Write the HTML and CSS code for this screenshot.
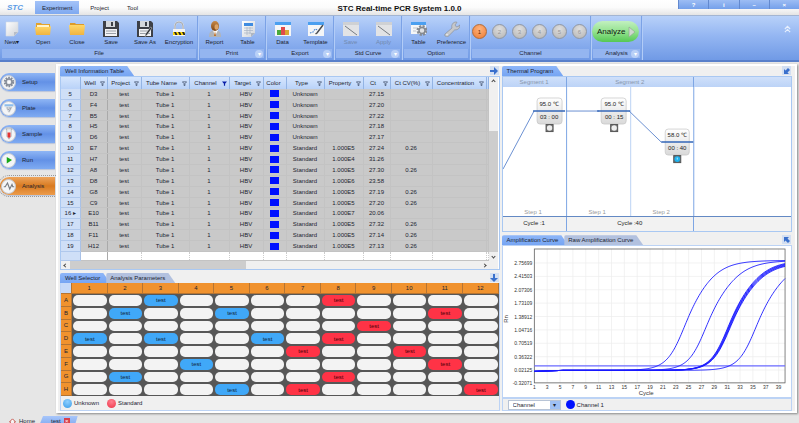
FILE: index.html
```html
<!DOCTYPE html>
<html lang="en">
<head>
<meta charset="utf-8">
<title>STC Real-time PCR System 1.0.0</title>
<link rel="stylesheet" href="styles.css">
</head>
<body>
<svg class="defs" aria-hidden="true">
  <defs>
    <linearGradient id="gold" x1="0" y1="0" x2="0" y2="1"><stop offset="0" stop-color="#ffd768"/><stop offset="1" stop-color="#f0b440"/></linearGradient>
    <linearGradient id="paper" x1="0" y1="0" x2="1" y2="1"><stop offset="0" stop-color="#ffffff"/><stop offset="1" stop-color="#cfd3d8"/></linearGradient>
    <linearGradient id="brown" x1="0" y1="0" x2="0" y2="1"><stop offset="0" stop-color="#c98a48"/><stop offset="1" stop-color="#7d4516"/></linearGradient>
    <linearGradient id="card" x1="0" y1="0" x2="0" y2="1"><stop offset="0" stop-color="#ffffff"/><stop offset="1" stop-color="#d9d9d9"/></linearGradient>
    <symbol id="i-new" viewBox="0 0 16 16"><path d="M2 1h12v10l-4 4H2z" fill="url(#paper)" stroke="#d5dbe6" stroke-width=".6"/><path d="M14 11h-4v4z" fill="#b8bec8"/></symbol>
    <symbol id="i-open" viewBox="0 0 16 16"><path d="M1 2h5l1 1h8v10H1z" fill="#e3a32d"/><path d="M2 4h12v4H2z" fill="#fff3cd"/><path d="M0 6h14l2-1-1 9H1z" fill="url(#gold)"/></symbol>
    <symbol id="i-close" viewBox="0 0 16 16"><path d="M1 2h5l1 1h8v11H1z" fill="#dd9b28"/><path d="M0 4h16l-1 10H1z" fill="url(#gold)"/></symbol>
    <symbol id="i-save" viewBox="0 0 16 16"><path d="M0 0h14l2 2v14H0z" fill="#3d4047"/><path d="M3 0h9v6H3z" fill="#d4d8dc"/><path d="M8 1h2v4H8z" fill="#3d4047"/><path d="M2 8h12v7H2z" fill="#f1f2f4"/><path d="M3 10h10M3 12.500h10" stroke="#9ba0a8" stroke-width="1"/></symbol>
    <symbol id="i-saveas" viewBox="0 0 16 16"><use href="#i-save"/><path d="M15 7l-5 7-2 1.500.5-2.500 5-7z" fill="#2b2d31" stroke="#d9dce0" stroke-width=".5"/></symbol>
    <symbol id="i-lock" viewBox="0 0 16 16"><path d="M4 8V5a4 4 0 0 1 8 0v3" fill="none" stroke="#d6d9de" stroke-width="2"/><path d="M4 8V5a4 4 0 0 1 8 0v3" fill="none" stroke="#7c8086" stroke-width=".5"/><path d="M2 8h12v7H2z" fill="#f3f3f3"/><path d="M2 11h12v3H2z" fill="#ffd800"/><path d="M3 11h2l1.500 3h-2zM7 11h2l1.500 3h-2zM11 11h2l1 2v1h-1.500z" fill="#222"/></symbol>
    <symbol id="i-user" viewBox="0 0 16 16"><path d="M2 16c0-5 2-7 6-7s6 2 6 7z" fill="#b0b4ba"/><path d="M6 9l2 6 3-6z" fill="#fff"/><path d="M8 10l1 5H7z" fill="#bb6b20"/><ellipse cx="8" cy="5" rx="4" ry="5" fill="url(#brown)"/><ellipse cx="9.500" cy="6" rx="2" ry="2.800" fill="#dca468"/></symbol>
    <symbol id="i-doc" viewBox="0 0 16 16"><path d="M2 0h13v12l-4 4H2z" fill="url(#paper)"/><path d="M4 2h9v3H4z" fill="#3f8be0"/><path d="M4 7h9M4 9.500h9M4 12h7M7 6v8M10 6v7" stroke="#a9b4c4" stroke-width=".7"/><path d="M15 12h-4v4z" fill="#aeb5c0"/></symbol>
    <symbol id="i-data" viewBox="0 0 16 16"><path d="M0 1h16v14H0z" fill="#f5f6f7"/><path d="M0 1h16v3H0z" fill="#4a9ff0"/><path d="M2 9h4v5H2z" fill="#49a93c"/><path d="M6 6h4v8H6z" fill="#e04a4a"/><path d="M10 9h4v5h-4z" fill="#d9a832"/></symbol>
    <symbol id="i-template" viewBox="0 0 16 16"><path d="M0 1h16v14H0z" fill="#f5f6f7"/><path d="M0 1h16v3H0z" fill="#4a9ff0"/><path d="M2 12l3-1 2-3 3 1" fill="none" stroke="#4a87d4" stroke-width="1.200" stroke-dasharray="1.500 1"/><path d="M15 4l-6 8-1.500 1" fill="none" stroke="#4a4d52" stroke-width="1.500"/></symbol>
    <symbol id="i-curve" viewBox="0 0 16 16"><path d="M0 1h16v14H0z" fill="#e2e3e5"/><path d="M0 1h16v3H0z" fill="#cfd1d4"/><path d="M2 5l12 9" stroke="#767b82" stroke-width="1"/></symbol>
    <symbol id="i-option" viewBox="0 0 16 16"><path d="M0 1h15v12H0z" fill="#f5f6f7"/><path d="M0 1h15v3H0z" fill="#4a9ff0"/><path d="M2 7h4M2 10h3" stroke="#c0c5cc"/><circle cx="11" cy="9.500" r="4" fill="none" stroke="#878c93" stroke-width="3" stroke-dasharray="2 1.140"/><circle cx="11" cy="9.500" r="3" fill="#dfe1e4" stroke="#85898f" stroke-width="1.500"/></symbol>
    <symbol id="i-wrench" viewBox="0 0 16 16"><path d="M1 13l7-6c-1-3 1-6 4-6l1 .3-2 2.700 1.500 2L15 5l.8-1.200c.6 3-2 5.500-5 5L4 15.500c-2 1-4-1-3-2.500z" fill="#c6c8cb" stroke="#85888d" stroke-width=".6"/><circle cx="3" cy="13.500" r=".8" fill="#eceef0"/></symbol>
    <symbol id="i-gear" viewBox="0 0 16 16"><circle cx="8" cy="8" r="5.500" fill="none" stroke="#858c98" stroke-width="3" stroke-dasharray="2.200 1.256"/><circle cx="8" cy="8" r="4" fill="#e9ebee" stroke="#858c98" stroke-width="2"/><circle cx="8" cy="8" r="1.500" fill="#fff"/></symbol>
    <symbol id="i-plate" viewBox="0 0 16 16"><path d="M2 3h12v3H2z" fill="#8dbdec"/><path d="M3 6h10l-4 8H7z" fill="#d7dbe0"/><path d="M5 8h2M8 8h2M6 10h2M11 7l-3 6" stroke="#8d949d" stroke-width="1"/></symbol>
    <symbol id="i-tube" viewBox="0 0 16 16"><path d="M4 1h8v1h-1v9l-3 4-3-4V2H4z" fill="#eceef0" stroke="#92979e" stroke-width=".7"/><path d="M6 6h4v5l-2 3-2-3z" fill="#e23434"/></symbol>
    <symbol id="i-play" viewBox="0 0 16 16"><path d="M5 4l7 4-7 4.500z" fill="#18a818"/></symbol>
    <symbol id="i-wave" viewBox="0 0 16 16"><path d="M1 9h2l3-5 3 8 3-6 1 3h2" fill="none" stroke="#777b82" stroke-width="1.500"/></symbol>
    <symbol id="i-filter" viewBox="0 0 6 6"><path d="M.5 1h5L3.500 3.200V5.500h-1V3.200z" fill="none" stroke="#33415c" stroke-width=".8"/></symbol>
    <symbol id="i-filter-on" viewBox="0 0 6 6"><path d="M0 .7h6L3.700 3.300v2.400H2.300V3.300z" fill="#0a1fa8"/></symbol>
    <symbol id="i-right" viewBox="0 0 8 8"><path d="M0 3h4V0l4 4-4 4V5H0z" fill="#3a70cc"/></symbol>
    <symbol id="i-down" viewBox="0 0 8 8"><path d="M3 0h2v4h3L4 8 0 4h3z" fill="#3a70cc"/></symbol>
    <symbol id="i-corner-sw" viewBox="0 0 8 8"><path d="M1 2l1.500 1.500L5 1l2 2-2.500 2.500L6 7H1z" fill="#3a70cc"/></symbol>
    <symbol id="i-corner-nw" viewBox="0 0 8 8"><path d="M1 1h5L4.500 2.500 7 5 5 7 2.500 4.500 1 6z" fill="#3a70cc"/></symbol>
  </defs>
</svg>

<header class="titlebar">
  <div class="start">
    <span class="logo">STC</span>
    <nav class="menus">
      <button class="menu active">Experiment</button>
      <button class="menu">Project</button>
      <button class="menu">Tool</button>
    </nav>
  </div>
  <h1 class="title">STC Real-time PCR System 1.0.0</h1>
  <div class="window-buttons"><button>?</button><button>i</button><button>–</button><button>×</button></div>
</header>

<div class="ribbon">
  <section class="group file">
    <div class="tools">
      <button class="tool narrow"><svg><use href="#i-new"/></svg>New▾</button>
      <button class="tool"><svg><use href="#i-open"/></svg>Open</button>
      <button class="tool"><svg><use href="#i-close"/></svg>Close</button>
      <button class="tool"><svg><use href="#i-save"/></svg>Save</button>
      <button class="tool"><svg><use href="#i-saveas"/></svg>Save As</button>
      <button class="tool"><svg><use href="#i-lock"/></svg>Encryption</button>
    </div>
    <div class="caption">File</div>
  </section>
  <section class="group">
    <div class="tools">
      <button class="tool"><svg><use href="#i-user"/></svg>Report</button>
      <button class="tool"><svg><use href="#i-doc"/></svg>Table</button>
    </div>
    <div class="caption more">Print</div>
  </section>
  <section class="group">
    <div class="tools">
      <button class="tool"><svg><use href="#i-data"/></svg>Data</button>
      <button class="tool"><svg><use href="#i-template"/></svg>Template</button>
    </div>
    <div class="caption more">Export</div>
  </section>
  <section class="group">
    <div class="tools">
      <button class="tool" disabled><svg><use href="#i-curve"/></svg>Save</button>
      <button class="tool" disabled><svg><use href="#i-curve"/></svg>Apply</button>
    </div>
    <div class="caption more">Std Curve</div>
  </section>
  <section class="group">
    <div class="tools">
      <button class="tool"><svg><use href="#i-option"/></svg>Table</button>
      <button class="tool"><svg><use href="#i-wrench"/></svg>Preference</button>
    </div>
    <div class="caption">Option</div>
  </section>
  <section class="group channel">
    <div class="tools channels">
      <button class="dot on">1</button><button class="dot">2</button><button class="dot">3</button><button class="dot">4</button><button class="dot">5</button><button class="dot">6</button>
    </div>
    <div class="caption">Channel</div>
  </section>
  <section class="group analysis">
    <div class="tools">
      <button class="analyze">Analyze<svg viewBox="0 0 8 12"><path d="M1 1l6 5-6 5z" fill="#cfd8cf" stroke="#8fae8f" stroke-width=".7"/></svg></button>
    </div>
    <div class="caption more">Analysis</div>
  </section>
  <button class="collapse" aria-label="Collapse"><svg viewBox="0 0 8 8"><path d="M1 4l3-3 3 3M1 7.500l3-3 3 3" fill="none" stroke="#e6effd" stroke-width="1.300"/></svg></button>
</div>

<div class="workspace">
  <nav class="sidebar">
    <button class="step"><span class="badge"><svg><use href="#i-gear"/></svg></span>Setup</button>
    <button class="step"><span class="badge"><svg><use href="#i-plate"/></svg></span>Plate</button>
    <button class="step"><span class="badge"><svg><use href="#i-tube"/></svg></span>Sample</button>
    <button class="step"><span class="badge"><svg><use href="#i-play"/></svg></span>Run</button>
    <button class="step current"><span class="badge"><svg><use href="#i-wave"/></svg></span>Analysis</button>
  </nav>

  <main class="frame">
    <div class="column">
      <section class="panel">
        <div class="tabs"><button class="tab">Well Information Table</button><button class="dock" aria-label="Dock right"><svg><use href="#i-right"/></svg></button></div>
        <div class="sheet">
          <table class="wells-table">
            <colgroup><col class="c19"><col class="c27"><col class="c34"><col class="c48"><col class="c40"><col class="c34"><col class="c23"><col class="c38"><col class="c39"><col class="c27"><col class="c42"><col class="c54"><col></colgroup>
            <thead><tr id="head"></tr></thead>
            <tbody id="rows"></tbody>
          </table>
          <div class="vscroll"><span class="arrow up"></span><span class="vthumb"></span><span class="arrow down"></span></div>
          <div class="hscroll"><span class="arrow left"></span><span class="hthumb"></span><span class="arrow right"></span></div>
        </div>
      </section>
      <section class="panel grow">
        <div class="tabs"><button class="tab">Well Selector</button><button class="tab idle">Analysis Parameters</button><button class="dock" aria-label="Dock down"><svg><use href="#i-down"/></svg></button></div>
        <div class="selector">
          <div class="plate" id="plate"></div>
          <div class="key"><i class="ball blue"></i>Unknown<i class="ball red"></i>Standard</div>
        </div>
      </section>
    </div>

    <div class="column">
      <section class="panel">
        <div class="tabs"><button class="tab">Thermal Program</button><button class="dock" aria-label="Dock"><svg><use href="#i-corner-sw"/></svg></button></div>
        <div class="thermal">
          <div class="segments"><span>Segment 1</span><span>Segment 2</span><span></span></div>
          <svg class="profile" viewBox="0 0 288 129">
            <path d="M127.500 0v129" stroke="#bcd3f5"/>
            <path d="M63.500 0v129M190.500 0v129" stroke="#7ea6e4"/>
            <g fill="url(#card)" stroke="#c4c4c4" stroke-width=".7">
              <rect x="34" y="11" width="25" height="26" rx="3"/><rect x="98" y="11" width="25" height="26" rx="3"/><rect x="162" y="42" width="24" height="26" rx="3"/>
            </g>
            <path d="M0 82L31 24M63 24h33M126 24l32 31" fill="none" stroke="#5b84cd" stroke-width=".9"/>
            <path d="M30 24h32M94 24h33M158 55h32" stroke="#3567b8" stroke-width="1.500"/>
            <g class="reading"><text x="46" y="19">95.0 ℃</text><text x="46" y="32">03 : 00</text><text x="111" y="19">95.0 ℃</text><text x="111" y="32">00 : 15</text><text x="174" y="50">58.0 ℃</text><text x="174" y="63">00 : 40</text></g>
            <g stroke="#555" stroke-width="1"><rect x="43" y="37.500" width="7" height="7" fill="#777"/><rect x="107.500" y="37.500" width="7" height="7" fill="#777"/><rect x="170.500" y="68.500" width="7" height="7" fill="#57707c"/></g>
            <circle cx="46.500" cy="41" r="2.700" fill="#eee"/><circle cx="111" cy="41" r="2.700" fill="#eee"/><circle cx="174" cy="72" r="2.800" fill="#1eb4f0"/><path d="M174 70.500v2" stroke="#fff" stroke-width=".7"/>
            <g class="faint"><text x="30" y="127">Step 1</text><text x="94" y="127">Step 1</text><text x="158" y="127">Step 2</text></g>
          </svg>
          <div class="segments cycles"><span>Cycle :1</span><span>Cycle :40</span><span></span></div>
        </div>
      </section>
      <section class="panel grow">
        <div class="tabs"><button class="tab">Amplification Curve</button><button class="tab idle">Raw Amplification Curve</button><button class="dock" aria-label="Dock"><svg><use href="#i-corner-nw"/></svg></button></div>
        <div class="chart"><svg id="curve" viewBox="0 0 288 151"></svg></div>
        <div class="controls">
          <span class="picker"><select aria-label="Channel"><option>Channel</option></select></span>
          <i class="ball solid"></i><span>Channel 1</span>
        </div>
      </section>
    </div>
  </main>
</div>

<footer class="pages">
  <button class="page"><svg viewBox="0 0 8 8"><path d="M0 5l4-4 4 4M1.500 4v4h5V4" fill="#fff" stroke="#c2453c" stroke-width="1"/></svg>Home</button>
  <button class="page open">test<span class="x">×</span></button>
</footer>
<script src="app.js"></script>
</body>
</html>
```
FILE: styles.css
```css
* { box-sizing: border-box; }
body {
  margin: 0;
  height: 100vh;
  min-height: 423px;
  display: flex;
  flex-direction: column;
  overflow: hidden;
  background: #e6e6e6;
  color: #1c2430;
  font: 6px/8px "Liberation Sans", Arial, sans-serif;
}
button, select { font: inherit; color: inherit; border: 0; margin: 0; padding: 0; background: none; }
.defs { position: absolute; width: 0; height: 0; }

.titlebar {
  display: grid;
  grid-template-columns: 1fr auto 1fr;
  height: 15px;
  flex: none;
  background: linear-gradient(#fff, #fbfbfb 50%, #e4e4e4);
}
.start { display: flex; }
.logo { width: 35px; padding-left: 7px; font: italic bold 8px/15px "Liberation Sans", sans-serif; color: #5b9be6; }
.menus { display: flex; align-items: flex-start; padding-top: 1px; }
.menu { height: 13px; padding: 0 7px; margin-right: 4px; }
.menu.active { background: linear-gradient(#a4c3f8, #7fa9f0); }
.title { margin: 0; font-size: 8px; line-height: 18px; color: #111; }
.window-buttons { display: flex; justify-self: end; height: 9px; width: 121px; }
.window-buttons button {
  flex: 1;
  color: #fff;
  font-weight: bold;
  line-height: 8px;
  background: linear-gradient(#9dbdf4, #74a0ea);
  border-left: 1px solid #6289cf;
}

.ribbon {
  display: flex;
  flex: none;
  height: 47px;
  background: linear-gradient(#b8d1f9, #94b6f2 45%, #709ae6);
  border-top: 1px solid #a3b5d2;
  border-bottom: 2px solid #587fca;
}
.group { width: 68px; flex: none; display: flex; flex-direction: column; padding: 0 1px 2px 0; border-right: 1px solid #7ba2e6; box-shadow: 1px 0 #b2ccf7; }
.group.file { width: 198px; }
.group.channel { width: 121px; }
.group.analysis { width: 51px; }
.tools { flex: 1; display: flex; justify-content: center; align-items: flex-start; padding-top: 5px; }
.tool { width: 33px; flex: none; display: flex; flex-direction: column; align-items: center; gap: 1px; line-height: 8px; white-space: nowrap; }
.tool svg { width: 16px; height: 16px; }
.file .tools { justify-content: flex-end; }
.file .tool { width: 34px; }
.file .tool.narrow { width: 28px; }
.tool:disabled { color: #7089b0; }
.caption { height: 9px; margin-left: 2px; text-align: center; line-height: 9px; background: #94b5f0; position: relative; }
.caption.more::after {
  content: "▾";
  position: absolute;
  right: 1px;
  top: 1px;
  width: 8px;
  height: 8px;
  border-radius: 4px;
  line-height: 8px;
  color: #fff;
  background: #b9d0f7;
}
.channels { gap: 5px; padding-top: 8px; }
.dot {
  width: 15px;
  height: 15px;
  border-radius: 50%;
  border: 1px solid #9097a3;
  color: #999;
  background: radial-gradient(circle at 50% 30%, #dedede, #b4b4b4);
}
.dot.on { color: #6b2a00; border-color: #b46a34; background: radial-gradient(circle at 50% 30%, #ffb27c, #ec7c34); }
.analyze {
  display: flex;
  align-items: center;
  justify-content: space-between;
  width: 47px;
  height: 21px;
  padding: 0 3px 0 5px;
  border-radius: 11px;
  font-size: 8px;
  color: #101810;
  background: linear-gradient(#c2f0bf, #94e290 50%, #55c853);
}
.analyze svg { width: 8px; height: 12px; }
.collapse { margin-left: auto; padding: 9px 8px 0; align-self: flex-start; }
.collapse svg { display: block; width: 7px; height: 8px; }

.workspace { flex: 1; min-height: 0; display: flex; padding-top: 2px; }
.sidebar { width: 56px; flex: none; display: flex; flex-direction: column; gap: 8px; padding: 9px 1px 0 0; }
.step {
  height: 18px;
  display: flex;
  align-items: center;
  gap: 6px;
  padding-left: 1px;
  border-radius: 9px 0 0 9px;
  background: linear-gradient(#8fb6f5, #6391e6 50%, #7fabf2);
  box-shadow: 0 1px 1px #b8c4da;
}
.step.current { background: linear-gradient(#eda45c, #d97a20 50%, #ec9c4c); outline: 1px dotted #999; outline-offset: 1px; }
.badge { width: 15px; height: 15px; border-radius: 50%; background: #f4f5f7; border: 1px solid #c3c8d0; display: grid; place-items: center; }
.badge svg { width: 12px; height: 12px; }

.frame {
  flex: 1;
  min-width: 0;
  display: grid;
  grid-template-columns: 439fr 290fr;
  gap: 2px;
  margin-right: 2px;
  padding: 0 3px 0 2px;
  background: #f0f0f0;
  border: 2px solid #fff;
  box-shadow: 1px 1px 2px #888;
}
.column { display: flex; flex-direction: column; gap: 3px; min-width: 0; min-height: 0; }
.panel { display: flex; flex-direction: column; min-height: 0; }
.panel.grow { flex: 1; }
.tabs { display: flex; height: 10px; flex: none; }
.tab {
  padding: 0 10px 0 5px;
  line-height: 10px;
  background: linear-gradient(#8eb6f8, #76a5f3);
  clip-path: polygon(0 0, calc(100% - 7px) 0, 100% 100%, 0 100%);
  border-radius: 2px 0 0 0;
}
.tab.idle { background: #b2c1df; margin-left: -4px; padding-left: 4px; }
.dock { margin-left: auto; margin-right: 1px; width: 9px; height: 9px; display: grid; place-items: center; background: #d3dff2; }
.dock svg { width: 8px; height: 8px; }

.sheet {
  display: grid;
  grid-template-columns: 1fr 9px;
  grid-template-rows: auto 8px;
  padding-right: 1px;
  border: 1px solid #a9c8f2;
  background: #fff;
}
.wells-table { width: 100%; height: 184px; border-collapse: collapse; table-layout: fixed; }
.wells-table th, .wells-table td { padding: 0; font-weight: normal; text-align: center; line-height: 6px; white-space: nowrap; border-right: 1px solid #c3c3c3; }
.wells-table td { background: #c9c9c9; border-bottom: 1px solid #c3c3c3; }
.wells-table thead th { height: 12px; background: linear-gradient(#d6e6fd, #b9d2f8); border-right: 1px solid #93b4e4; }
.wells-table tbody th { background: #cfdff7; border-bottom: 1px solid #b0c8ec; border-right: 1px solid #a9c1e6; }
.wells-table .blank td { height: 9px; background: #fff; border-right: 1px dotted #ccc; }
.wells-table td:nth-child(2) { border-right: 1px solid #aaa; }
.label { display: flex; align-items: center; justify-content: center; padding-right: 2px; }
.label span { flex: 1; }
.label svg { width: 5px; height: 5px; flex: none; }
.swatch { display: block; width: 9px; height: 7px; margin: 0 auto; background: #0010ff; }
.c19 { width: 19px; } .c23 { width: 23px; } .c27 { width: 27px; } .c34 { width: 34px; }
.c38 { width: 38px; } .c39 { width: 39px; } .c40 { width: 40px; } .c42 { width: 42px; }
.c48 { width: 48px; } .c54 { width: 54px; }
.vscroll { display: grid; grid-template-rows: 9px 1fr 9px; background: #f0f0f0; place-items: center; }
.vthumb { width: 100%; height: 73%; align-self: end; background: #cdcdcd; }
.hscroll { grid-column: 1 / -1; display: grid; grid-template-columns: 9px 1fr 9px 9px; background: #f0f0f0; place-items: center; }
.hthumb { width: 43%; height: 100%; justify-self: start; background: #cdcdcd; }
.arrow { width: 3px; height: 3px; border: solid #444; border-width: 1px 0 0 1px; }
.arrow.up { transform: rotate(45deg); }
.arrow.down { transform: rotate(225deg); }
.arrow.left { transform: rotate(-45deg); }
.arrow.right { transform: rotate(135deg); }

.selector { flex: 1; display: flex; flex-direction: column; border: 1px solid #bcd3f5; border-top: 0; }
.plate {
  flex: 1;
  display: grid;
  grid-template-columns: 11px repeat(12, 1fr);
  grid-template-rows: 11px repeat(8, 1fr);
  background: #575757;
}
.plate b { font-weight: normal; display: grid; place-items: center; background: #f0922e; border: solid #b57432; border-width: 0 1px 1px 0; }
.plate .corner { background: #c6d9f8; }
.well { margin: 1px; border-radius: 5px; background: #f3f3f3; line-height: 8px; color: #10253c; }
.well.unknown { background: #40a8f8; }
.well.standard { background: #ff3346; color: #4a0008; }
.key { height: 14px; flex: none; display: flex; align-items: center; gap: 2px; padding-left: 2px; }
.ball { width: 9px; height: 9px; border-radius: 50%; flex: none; }
.ball.blue { background: radial-gradient(circle at 50% 30%, #8fd0ff, #3a9ce8); }
.ball.red { margin-left: 6px; background: radial-gradient(circle at 50% 30%, #ff8090, #ee3346); }
.ball.solid { background: #0010ff; }

.thermal { border: 1px solid #a9c8f2; background: #fff; }
.segments { display: grid; grid-template-columns: 64fr 127fr 97fr; height: 10px; background: linear-gradient(#cfe0fa, #bcd3f7); color: #8795ab; text-align: center; line-height: 10px; }
.segments span { border-right: 1px solid #7ea6e4; }
.segments span:last-child { border: 0; }
.segments.cycles { height: 15px; line-height: 13px; background: #f2f2f2; color: #222; border-top: 1px solid #6389c4; }
.profile { display: block; width: 100%; }
.profile text { font-size: 6px; text-anchor: middle; }
.reading { fill: #222; }
.faint { fill: #999; }

.chart { flex: 1; min-height: 0; border: 1px solid #bcd3f5; background: #fff; }
.chart svg { display: block; width: 100%; height: 100%; }
.chart text { font-size: 5px; fill: #333; }
.chart .axis-title { font-size: 6px; }
.controls { height: 13px; flex: none; display: flex; align-items: center; gap: 2px; padding-left: 5px; border: solid #bcd3f5; border-width: 1px; }
.picker { position: relative; width: 53px; height: 10px; margin-right: 3px; }
.picker select { appearance: none; display: block; width: 100%; height: 10px; padding-left: 4px; background: #fff; border: 1px solid #b8c4d6; line-height: 8px; }
.picker::after { content: "▾"; position: absolute; right: 1px; top: 1px; width: 10px; height: 8px; text-align: center; background: #9fc0f3; pointer-events: none; }

.pages { display: flex; flex: none; height: 7px; margin-top: 3px; padding-left: 5px; align-items: flex-start; }
.page { display: flex; align-items: center; gap: 3px; height: 10px; padding: 0 4px; }
.page svg { width: 7px; height: 7px; }
.page.open { padding: 0 8px 0 12px; background: linear-gradient(#a8c6fa, #7fa9f0); clip-path: polygon(4px 0, 100% 0, calc(100% - 3px) 100%, 0 100%); }
.x { width: 6px; height: 6px; line-height: 6px; color: #fff; background: #d8414c; }
```
FILE: app.js
```js
const columns = ["Well", "Project", "Tube Name", "Channel", "Target", "Color", "Type", "Property", "Ct", "Ct CV(%)", "Concentration"];
const samples = [
  ["D3", "", "27.15", ""], ["F4", "", "27.20", ""], ["B5", "", "27.22", ""], ["H5", "", "27.18", ""], ["D6", "", "27.17", ""],
  ["E7", "1.000E5", "27.24", "0.26"], ["H7", "1.000E4", "31.26", ""], ["A8", "1.000E5", "27.30", "0.26"], ["D8", "1.000E6", "23.58", ""],
  ["G8", "1.000E5", "27.19", "0.26"], ["C9", "1.000E5", "27.20", "0.26"], ["E10", "1.000E7", "20.06", ""],
  ["B11", "1.000E5", "27.32", "0.26"], ["F11", "1.000E5", "27.14", "0.26"], ["H12", "1.000E5", "27.13", "0.26"]
];

document.getElementById("head").innerHTML = "<th></th>" + columns.map(name => {
  const icon = name === "Color" ? "" : `<svg><use href="#i-filter${name === "Channel" ? "-on" : ""}"/></svg>`;
  return `<th><div class="label"><span>${name}</span>${icon}</div></th>`;
}).join("") + "<th></th>";

document.getElementById("rows").innerHTML = samples.map(([well, property, ct, cv], i) => {
  const cells = [well, "test", "Tube 1", "1", "HBV", '<i class="swatch"></i>', property ? "Standard" : "Unknown", property, ct, cv, "", ""];
  return `<tr><th>${i + 5}${well === "E10" ? " ▸" : ""}</th>${cells.map(c => `<td>${c}</td>`).join("")}</tr>`;
}).join("") + `<tr class="blank"><th></th>${"<td></td>".repeat(12)}</tr>`;

// Plate map: 8 rows by 12 columns.
const unknown = ["A3", "B2", "B5", "D1", "D3", "D6", "F4", "G2", "H5"];
const standard = ["A8", "B11", "C9", "D8", "E7", "E10", "F11", "G8", "H7", "H12"];
let plate = '<b class="corner"></b>';
for (let c = 1; c <= 12; c++) plate += `<b>${c}</b>`;
for (const r of "ABCDEFGH") {
  plate += `<b>${r}</b>`;
  for (let c = 1; c <= 12; c++) {
    const id = r + c;
    const kind = unknown.includes(id) ? "unknown" : standard.includes(id) ? "standard" : "";
    plate += `<button class="well ${kind}" aria-label="${id}">${kind ? "test" : ""}</button>`;
  }
}
document.getElementById("plate").innerHTML = plate;

// Amplification chart.
const box = { left: 31, right: 282, top: 3, bottom: 137 };
const baseline = 124.5, height = 110, perCycle = 251 / 39;
let chart = "";
["2.75699", "2.41503", "2.07306", "1.73109", "1.38912", "1.04716", "0.70519", "0.36322", "0.02125", "-0.32071"].forEach((label, i) => {
  const y = 17 + i * 13.4;
  chart += `<path d="M${box.left} ${y}H${box.right}" stroke="#ececec" stroke-width=".7"/><text x="29" y="${y + 2}" text-anchor="end">${label}</text>`;
});
for (let c = 1; c < 40; c += 2) {
  const x = box.left + (c - 1) * perCycle;
  chart += `<path d="M${x} ${box.top}V${box.bottom}" stroke="#ececec" stroke-width=".7"/><text x="${x}" y="143" text-anchor="middle">${c}</text>`;
}
chart += `<rect x="31" y="3" width="251" height="134" fill="none" stroke="#666" stroke-width=".8"/>`;
chart += `<path d="M31 120H282" stroke="#6a6aff" stroke-width="1.400"/>`;
function curve(mid, early, late, drop) {
  let d = "";
  for (let x = box.left; x <= box.right; x += 1) {
    const t = x - mid;
    const k = early + (late - early) / (1 + Math.exp(-t / 8));
    const dip = x < 60 ? (60 - x) / 29 : 0;
    const y = baseline + dip - (height - drop) / (1 + Math.exp(-t / k));
    d += (d ? "L" : "M") + x + " " + y.toFixed(2);
  }
  return `<path d="${d}" fill="none" stroke="#1a1aff" stroke-width=".9"/>`;
}
chart += curve(186, 10, 14, 0) + curve(208, 10, 15, 0) + curve(258, 10, 15, 0);
for (let i = -2; i <= 2; i++) chart += curve(231 + i * 0.5, 10, 15, 1 + i * 0.6);
chart += `<text class="axis-title" x="143" y="149" text-anchor="middle">Cycle</text><text class="axis-title" transform="translate(5 73) rotate(-90)" text-anchor="middle">Rn</text>`;
document.getElementById("curve").innerHTML = chart;
```
